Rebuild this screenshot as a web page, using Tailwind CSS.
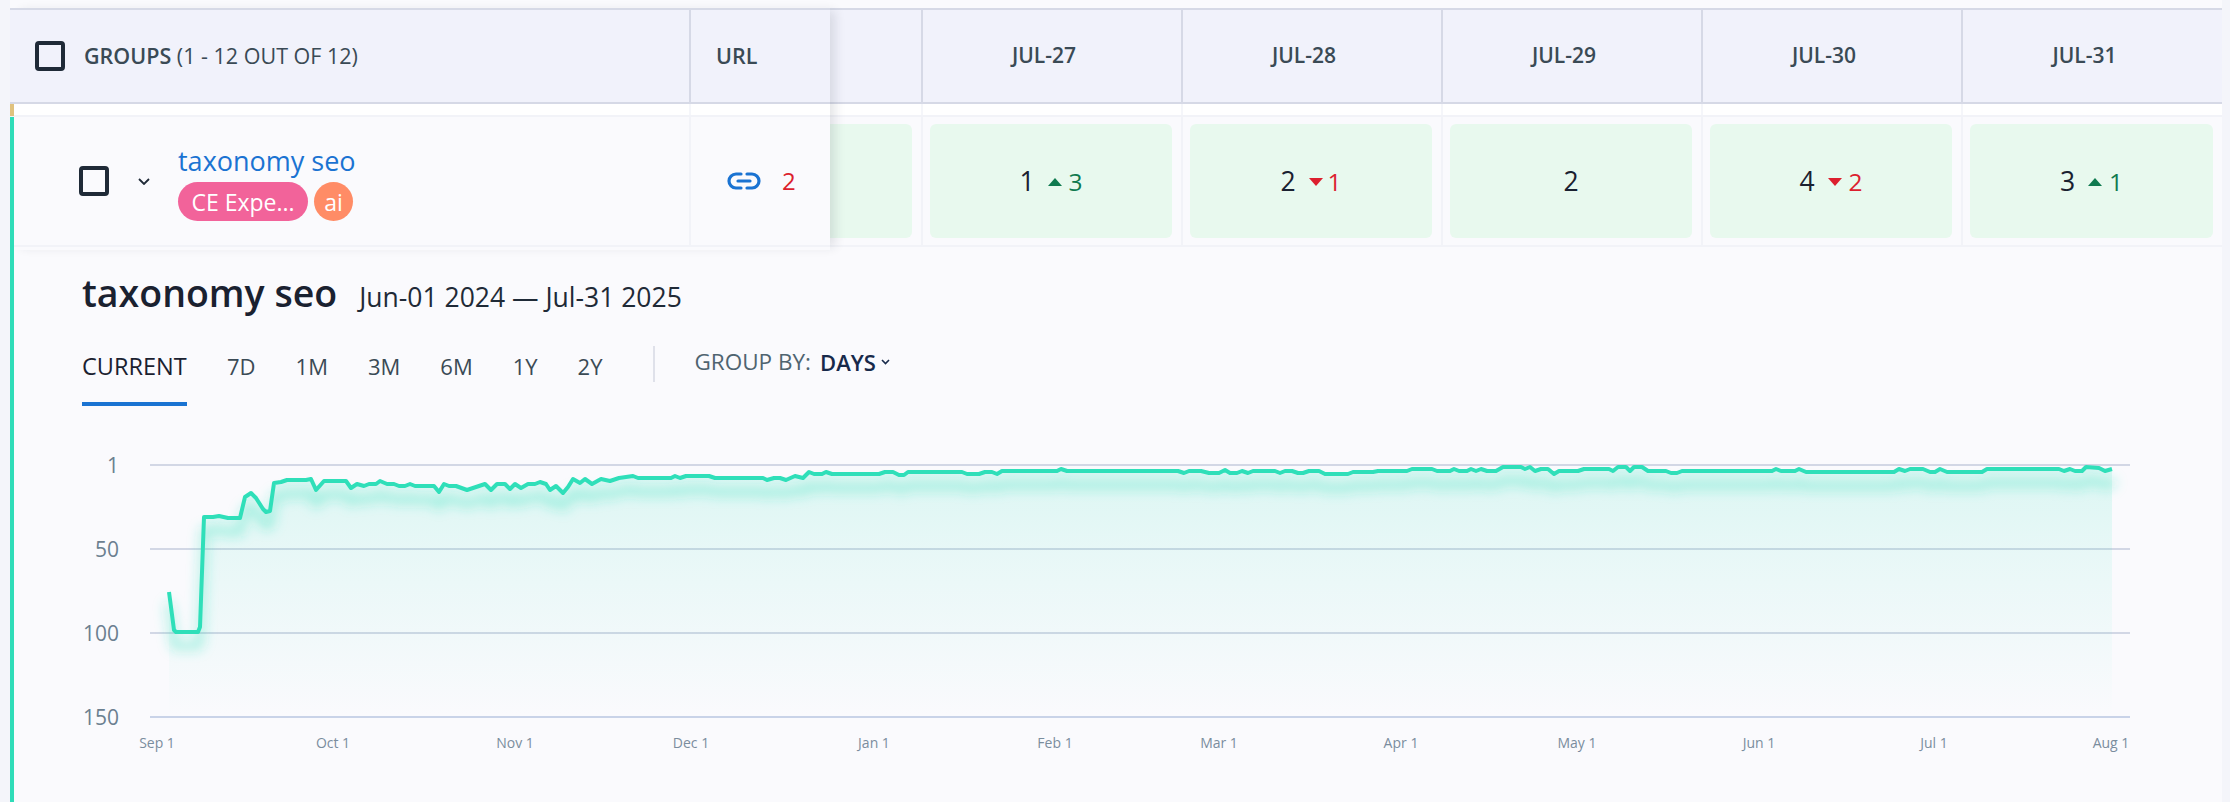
<!DOCTYPE html>
<html lang="en">
<head>
  <meta charset="UTF-8" />
  <title>Groups</title>
  <script src="https://cdn.jsdelivr.net/npm/@tailwindcss/browser@4"></script>
</head>
<body class="bg-[#fafafd] font-['Open_Sans',sans-serif] overflow-hidden">
  <div class="flex w-[2230px] h-[802px] bg-[#f4f5fa]">
    <div class="w-[10px] shrink-0"></div>

    <div class="w-[2212px] h-[802px] bg-[#fafafd] pt-[8px]">
      <!-- Table -->
      <div class="flex h-[239px]">
        <!-- Sticky columns -->
        <div class="relative z-10 w-[820px] h-[242px] shrink-0 flex flex-col bg-[#fafafd] shadow-[8px_0_10px_-3px_rgba(30,40,60,0.12)]">
          <div class="flex h-[96px] shrink-0 border-y-2 border-[#d6d9e6] bg-[#f1f2fb] text-[#3a4a55] text-[21.5px]">
            <div class="w-[679px] flex items-center pl-[25px]">
              <span class="w-[30px] h-[30px] border-[4px] border-[#1f2a37] rounded-[4px]"></span>
              <span class="ml-[19px]"><span class="font-semibold">GROUPS</span> <span class="font-medium">(1 - 12 OUT OF 12)</span></span>
            </div>
            <div class="flex-1 flex items-center pl-[25px] border-l-2 border-[#d6d9e6] font-semibold">URL</div>
          </div>
          <div class="flex h-[13px] shrink-0 bg-white border-b-2 border-[#f2f3f8]">
            <div class="w-[4px] h-[12px] bg-[#e0c27e]"></div>
            <div class="w-[675px]"></div>
            <div class="flex-1 border-l-2 border-[#f5f6fa]"></div>
          </div>
          <div class="flex flex-1 border-l-4 border-[#2fdcb8] bg-[#fafafd]">
            <div class="w-[675px] h-[130px] border-b-2 border-[#f2f3f8] flex items-center pl-[65px]">
              <span class="w-[30px] h-[30px] border-[4px] border-[#1f2a37] rounded-[4px]"></span>
              <svg class="ml-[29px]" width="12" height="7" viewBox="0 0 12 7" fill="none" stroke="#1f2a37" stroke-width="1.8"><path d="M1 1l5 5 5-5" /></svg>
              <div class="ml-[28px] flex flex-col mt-[2px]">
                <a class="text-[27px] leading-[34px] text-[#1a73d2]">taxonomy seo</a>
                <div class="flex gap-[6px] mt-[4px] text-white text-[23px] leading-[41px]">
                  <span class="w-[130px] h-[39px] rounded-full bg-[#f2639a] text-center">CE Expe...</span>
                  <span class="w-[39px] h-[39px] rounded-full bg-[#ff8c66] text-center">ai</span>
                </div>
              </div>
            </div>
            <div class="flex-1 h-[130px] border-b-2 border-l-2 border-[#f2f3f8] flex items-center pl-[36px]">
              <svg width="34" height="18" viewBox="0 0 34 18" fill="none" stroke="#1a73d2" stroke-width="3.2" stroke-linecap="round"><path d="M14 2H9a7 7 0 0 0 0 14h5M20 2h5a7 7 0 0 1 0 14h-5M11 9h12" /></svg>
              <span class="ml-[21px] text-[24px] text-[#dc1f2e]">2</span>
            </div>
          </div>
        </div>

        <!-- Date columns -->
        <div class="w-[1392px] flex flex-col">
          <div class="flex h-[96px] shrink-0 border-y-2 border-[#d6d9e6] bg-[#f1f2fb] text-[#3a4a55] text-[21px] font-semibold">
            <div class="w-[91px]"></div>
            <div class="w-[260px] border-l-2 border-[#d6d9e6] flex items-center justify-center pr-[16px]">JUL-27</div>
            <div class="w-[260px] border-l-2 border-[#d6d9e6] flex items-center justify-center pr-[16px]">JUL-28</div>
            <div class="w-[260px] border-l-2 border-[#d6d9e6] flex items-center justify-center pr-[16px]">JUL-29</div>
            <div class="w-[260px] border-l-2 border-[#d6d9e6] flex items-center justify-center pr-[16px]">JUL-30</div>
            <div class="flex-1 border-l-2 border-[#d6d9e6] flex items-center justify-center pr-[16px]">JUL-31</div>
          </div>
          <div class="flex h-[13px] shrink-0 bg-white border-b-2 border-[#f2f3f8]">
            <div class="w-[91px]"></div>
            <div class="w-[260px] border-l-2 border-[#f5f6fa]"></div>
            <div class="w-[260px] border-l-2 border-[#f5f6fa]"></div>
            <div class="w-[260px] border-l-2 border-[#f5f6fa]"></div>
            <div class="w-[260px] border-l-2 border-[#f5f6fa]"></div>
            <div class="flex-1 border-l-2 border-[#f5f6fa]"></div>
          </div>
          <div class="flex h-[130px] shrink-0 border-b-2 border-[#f2f3f8] text-[26.5px] text-[#1a2130]">
            <div class="w-[91px] py-[7px] pr-[9px]">
              <div class="h-full bg-[#e8f9ee] rounded-r-[6px]"></div>
            </div>
            <div class="w-[260px] border-l-2 border-[#f2f3f8] pl-[7px] pr-[9px] py-[7px]">
              <div class="h-full bg-[#e8f9ee] rounded-[6px] flex items-center justify-center pt-[2px]">
                <span>1</span>
                <svg class="ml-[13px] mr-[7px]" width="14" height="8" viewBox="0 0 14 8"><path d="M7 0L14 8H0z" fill="#0f7a4f" /></svg>
                <span class="text-[24.5px] text-[#0f7a4f]">3</span>
              </div>
            </div>
            <div class="w-[260px] border-l-2 border-[#f2f3f8] pl-[7px] pr-[9px] py-[7px]">
              <div class="h-full bg-[#e8f9ee] rounded-[6px] flex items-center justify-center pt-[2px]">
                <span>2</span>
                <svg class="ml-[13px] mr-[5px]" width="14" height="8" viewBox="0 0 14 8"><path d="M7 8L0 0H14z" fill="#dc1f2e" /></svg>
                <span class="text-[24.5px] text-[#dc1f2e]">1</span>
              </div>
            </div>
            <div class="w-[260px] border-l-2 border-[#f2f3f8] pl-[7px] pr-[9px] py-[7px]">
              <div class="h-full bg-[#e8f9ee] rounded-[6px] flex items-center justify-center pt-[2px]">
                <span>2</span>
              </div>
            </div>
            <div class="w-[260px] border-l-2 border-[#f2f3f8] pl-[7px] pr-[9px] py-[7px]">
              <div class="h-full bg-[#e8f9ee] rounded-[6px] flex items-center justify-center pt-[2px]">
                <span>4</span>
                <svg class="ml-[13px] mr-[7px]" width="14" height="8" viewBox="0 0 14 8"><path d="M7 8L0 0H14z" fill="#dc1f2e" /></svg>
                <span class="text-[24.5px] text-[#dc1f2e]">2</span>
              </div>
            </div>
            <div class="flex-1 border-l-2 border-[#f2f3f8] pl-[7px] pr-[9px] py-[7px]">
              <div class="h-full bg-[#e8f9ee] rounded-[6px] flex items-center justify-center pt-[2px]">
                <span>3</span>
                <svg class="ml-[13px] mr-[7px]" width="14" height="8" viewBox="0 0 14 8"><path d="M7 0L14 8H0z" fill="#0f7a4f" /></svg>
                <span class="text-[24.5px] text-[#0f7a4f]">1</span>
              </div>
            </div>
          </div>
        </div>
      </div>

      <!-- Detail panel -->
      <div class="h-[555px] border-l-4 border-[#2fdcb8] pl-[68px]">
        <div class="flex items-baseline pt-[23px] h-[87px]">
          <h2 class="text-[37.5px] font-semibold text-[#1a2130] leading-[46px]">taxonomy seo</h2>
          <span class="ml-[22px] text-[26.5px] text-[#1f2a37]">Jun-01 2024 — Jul-31 2025</span>
        </div>
        <div class="flex items-start h-[106px]">
          <div class="w-[105px] h-[72px] border-b-4 border-[#1a73d2] text-[23.5px] text-[#1a2130] pt-[15px] leading-[34px] whitespace-nowrap">CURRENT</div>
          <div class="flex text-[22px] text-[#3a4a55] pt-[15px] leading-[34px]">
            <span class="ml-[40px]">7D</span>
            <span class="ml-[40px]">1M</span>
            <span class="ml-[40px]">3M</span>
            <span class="ml-[40px]">6M</span>
            <span class="ml-[40px]">1Y</span>
            <span class="ml-[40px]">2Y</span>
          </div>
          <div class="w-[2px] h-[36px] ml-[51px] mt-[12px] bg-[#dfe1ea]"></div>
          <div class="flex items-center ml-[39px] mt-[11px] text-[22.5px] leading-[34px]">
            <span class="text-[#4f6470]">GROUP BY:</span>
            <span class="ml-[9px] font-semibold text-[22px] text-[#17294a]">DAYS</span>
            <svg class="ml-[5px]" width="9" height="6" viewBox="0 0 9 6" fill="none" stroke="#17294a" stroke-width="1.6"><path d="M1 1l3.5 3.5L8 1" /></svg>
          </div>
        </div>

        <svg width="2060" height="362" viewBox="82 440 2060 362" class="block overflow-visible">
          <defs>
            <linearGradient id="areaFill" gradientUnits="userSpaceOnUse" x1="0" y1="465" x2="0" y2="717">
              <stop offset="0" stop-color="#2fdfb9" stop-opacity="0.15" />
              <stop offset="0.35" stop-color="#2fdfb9" stop-opacity="0.09" />
              <stop offset="1" stop-color="#2fdfb9" stop-opacity="0" />
            </linearGradient>
            <filter id="glow" x="-5%" y="-50%" width="110%" height="200%">
              <feGaussianBlur stdDeviation="6" />
            </filter>
          </defs>

          <g class="stroke-[#d2d7e5]" stroke-width="2">
            <line x1="150" x2="2130" y1="465" y2="465" />
            <line x1="150" x2="2130" y1="549" y2="549" />
            <line x1="150" x2="2130" y1="633" y2="633" />
            <line x1="150" x2="2130" y1="717" y2="717" class="stroke-[#c9d3e8]" />
          </g>

          <path id="area" fill="url(#areaFill)" />
          <path id="shade" fill="none" stroke="#2fdfb9" stroke-width="9" stroke-opacity="0.32" stroke-linecap="round" stroke-linejoin="round" transform="translate(0 14)" filter="url(#glow)" />
          <path id="line" fill="none" stroke="#2fdfb9" stroke-width="4" stroke-linejoin="round" />

          <g class="fill-[#6b8090] text-[21px]" text-anchor="end">
            <text x="119" y="473">1</text>
            <text x="119" y="557">50</text>
            <text x="119" y="641">100</text>
            <text x="119" y="725">150</text>
          </g>
          <g class="fill-[#7a8d9e] text-[14px]" text-anchor="middle">
            <text x="157" y="748">Sep 1</text>
            <text x="333" y="748">Oct 1</text>
            <text x="515" y="748">Nov 1</text>
            <text x="691" y="748">Dec 1</text>
            <text x="874" y="748">Jan 1</text>
            <text x="1055" y="748">Feb 1</text>
            <text x="1219" y="748">Mar 1</text>
            <text x="1401" y="748">Apr 1</text>
            <text x="1577" y="748">May 1</text>
            <text x="1759" y="748">Jun 1</text>
            <text x="1934" y="748">Jul 1</text>
            <text x="2111" y="748">Aug 1</text>
          </g>
        </svg>
      </div>
    </div>
  </div>

  <script>
    const pts = [[169,592],[174,630],[176,632],[198,632],[200,627],[204,517],[213,517],[219,516],[228,518],[240,518],[245,497],[251,493],[256,498],[263,509],[266,512],[270,511],[274,483],[281,482],[287,480],[306,480],[311,479],[316,490],[324,481],[346,481],[351,488],[357,484],[364,486],[369,484],[376,484],[380,481],[387,484],[394,484],[399,486],[405,486],[410,484],[415,486],[434,486],[439,492],[444,484],[449,486],[456,486],[467,490],[485,484],[491,490],[497,484],[505,484],[510,489],[515,484],[521,488],[528,484],[535,484],[540,482],[546,484],[550,490],[556,486],[563,493],[568,487],[573,479],[580,483],[585,479],[592,484],[601,479],[610,481],[619,478],[633,476],[638,478],[671,478],[675,476],[680,478],[686,476],[709,476],[715,478],[763,478],[767,480],[774,478],[780,478],[786,480],[795,476],[803,478],[809,472],[814,474],[822,474],[826,472],[832,474],[879,474],[885,472],[893,472],[899,475],[904,475],[908,472],[962,472],[967,474],[979,474],[985,472],[992,472],[997,474],[1002,471],[1057,471],[1061,469],[1067,471],[1178,471],[1184,473],[1189,471],[1201,471],[1209,473],[1219,473],[1225,470],[1230,473],[1237,473],[1242,471],[1248,473],[1253,471],[1275,471],[1280,473],[1285,471],[1292,471],[1298,473],[1303,473],[1309,471],[1319,471],[1325,474],[1348,474],[1353,472],[1373,472],[1378,471],[1407,471],[1412,469],[1432,469],[1437,471],[1450,471],[1454,469],[1459,471],[1467,471],[1471,469],[1476,471],[1481,469],[1487,471],[1496,471],[1503,467],[1521,467],[1525,469],[1530,467],[1535,471],[1541,469],[1548,469],[1554,474],[1559,471],[1578,471],[1584,469],[1609,469],[1613,471],[1618,467],[1626,467],[1630,471],[1634,467],[1642,467],[1648,471],[1666,471],[1671,473],[1677,473],[1682,471],[1772,471],[1776,469],[1781,471],[1795,471],[1799,469],[1806,472],[1894,472],[1899,469],[1905,471],[1910,469],[1923,469],[1930,472],[1935,472],[1940,469],[1947,472],[1982,472],[1987,469],[2059,469],[2064,471],[2070,469],[2075,471],[2082,471],[2086,467],[2099,468],[2105,471],[2112,469]];
    const d = 'M' + pts.map(p => p.join(' ')).join('L');
    document.getElementById('line').setAttribute('d', d);
    document.getElementById('shade').setAttribute('d', d);
    document.getElementById('area').setAttribute('d', d + 'L2112 717L169 717Z');
  </script>
</body>
</html>
